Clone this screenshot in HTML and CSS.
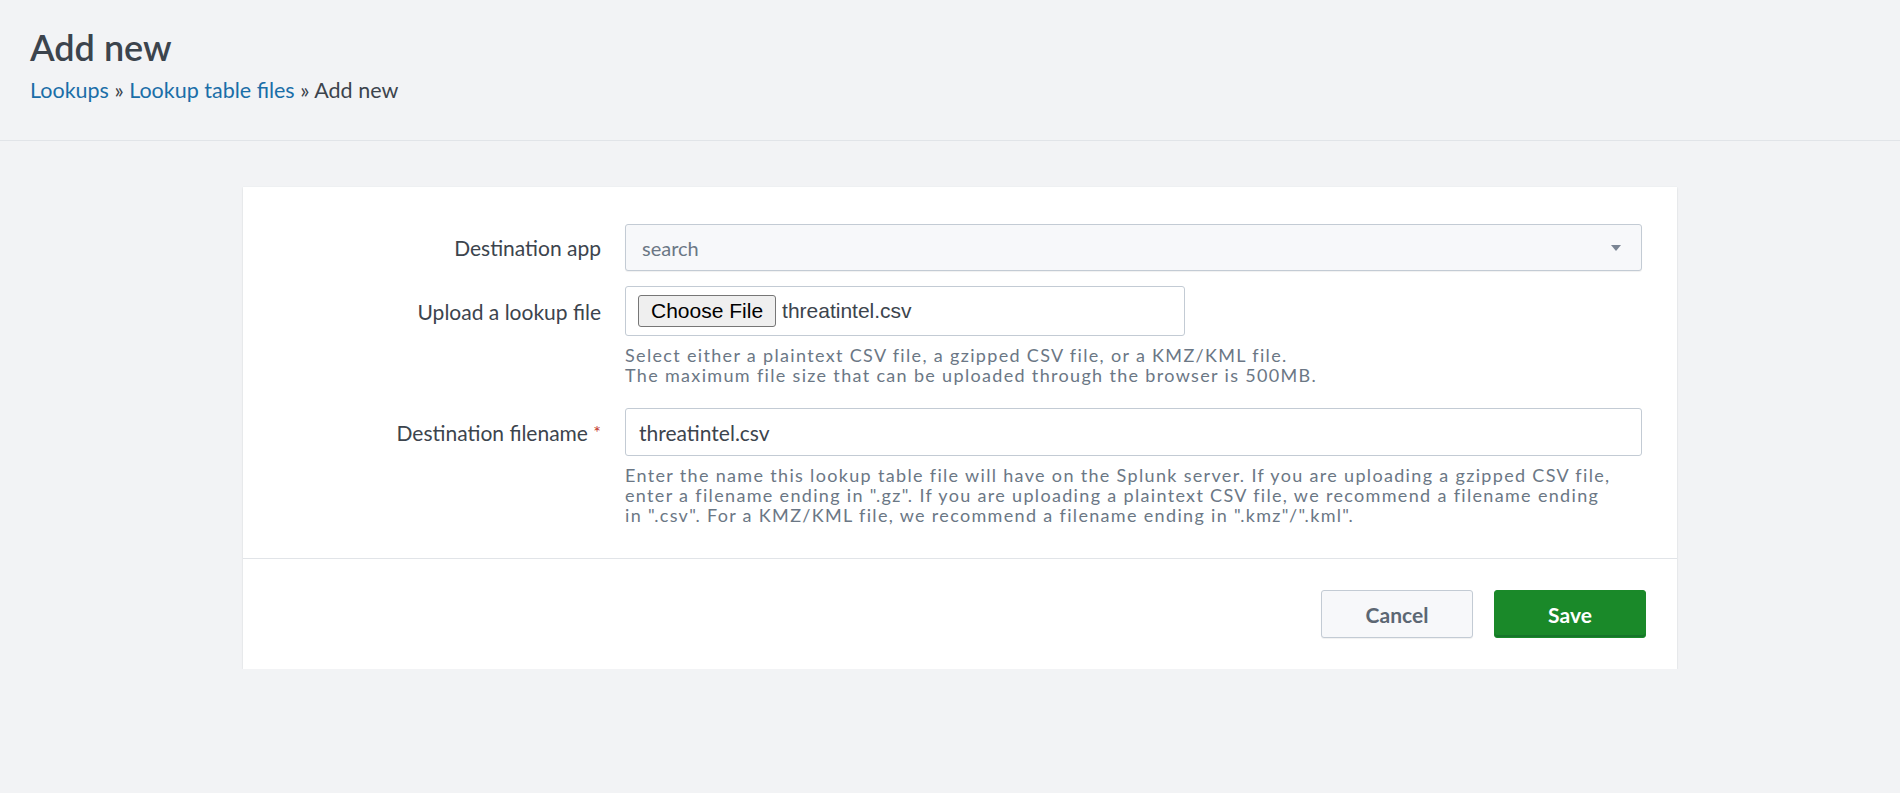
FILE: index.html
```html
<!DOCTYPE html>
<html lang="en">
<head>
<meta charset="utf-8">
<title>Add new</title>
<link rel="stylesheet" href="styles.css">
</head>
<body>
<header class="page-header">
  <h1 class="page-title">Add new</h1>
  <nav class="breadcrumb">
    <a href="#" class="crumb-link">Lookups</a> <span class="sep">»</span> <a href="#" class="crumb-link">Lookup table files</a> <span class="sep">»</span> <span class="crumb-current">Add new</span>
  </nav>
</header>

<main class="content">
  <section class="card">
    <div class="form-body">
      <div class="field">
        <label class="field-label">Destination app</label>
        <div class="select">
          <span class="select-value">search</span>
          <span class="caret"></span>
        </div>
      </div>

      <div class="field">
        <label class="field-label">Upload a lookup file</label>
        <div class="file-box">
          <span class="file-btn">Choose File</span>
          <span class="file-name">threatintel.csv</span>
        </div>
        <p class="help">Select either a plaintext CSV file, a gzipped CSV file, or a KMZ/KML file.<br>The maximum file size that can be uploaded through the browser is 500MB.</p>
      </div>

      <div class="field">
        <label class="field-label">Destination filename <span class="req">*</span></label>
        <div class="text-input">threatintel.csv</div>
        <p class="help">Enter the name this lookup table file will have on the Splunk server. If you are uploading a gzipped CSV file,<br>enter a filename ending in ".gz". If you are uploading a plaintext CSV file, we recommend a filename ending<br>in ".csv". For a KMZ/KML file, we recommend a filename ending in ".kmz"/".kml".</p>
      </div>
    </div>

    <div class="form-footer">
      <button class="btn btn-cancel">Cancel</button>
      <button class="btn btn-save">Save</button>
    </div>
  </section>
</main>
</body>
</html>
```
FILE: styles.css
```css
* { box-sizing: border-box; }

html, body {
  margin: 0;
  padding: 0;
  background: #f2f3f5;
  font-family: Lato, "Open Sans", sans-serif;
  color: #3c444d;
}

.page-header {
  padding: 26px 30px 37px;
  border-bottom: 1px solid #e1e4e8;
}

.page-title {
  margin: 0;
  font-size: 36px;
  font-weight: 600;
  line-height: 43px;
  color: #3c444d;
}

.breadcrumb {
  margin-top: 9px;
  font-size: 21.5px;
  line-height: 25px;
  color: #3c444d;
}

.crumb-link {
  color: #1a6ea8;
  text-decoration: none;
}

.sep { color: #3c444d; }

.content {
  padding: 46px 0 0 243px;
}

.card {
  width: 1434px;
  background: #fff;
  box-shadow: 0 1px 2px rgba(0, 0, 0, 0.1), 0 0 1px rgba(60, 80, 110, 0.08);
}

.form-body {
  padding: 37px 0 33px;
  display: flex;
  flex-direction: column;
  gap: 15px;
}

.field {
  display: grid;
  grid-template-columns: 358px 1017px;
  column-gap: 24px;
  align-items: center;
}

.field-label {
  text-align: right;
  font-size: 21px;
  line-height: 25px;
  color: #3c444d;
}

.req { color: #c3342b; font-size: 18px; vertical-align: top; }

.select {
  height: 47px;
  background: #f7f8fa;
  border: 1px solid #c3cbd4;
  border-radius: 3px;
  box-shadow: 0 1px 1px rgba(0, 0, 0, 0.06);
  display: flex;
  align-items: center;
  justify-content: space-between;
  padding: 0 20px 0 16px;
}

.select-value {
  font-size: 20px;
  color: #6b7785;
}

.caret {
  width: 0;
  height: 0;
  border-left: 5px solid transparent;
  border-right: 5px solid transparent;
  border-top: 6px solid #7b8594;
}

.file-box {
  width: 560px;
  height: 50px;
  border: 1px solid #c3cbd4;
  border-radius: 3px;
  background: #fff;
  display: flex;
  align-items: center;
  padding-left: 12px;
  font-family: "Liberation Sans", Arial, sans-serif;
}

.file-btn {
  height: 32px;
  padding: 0 12px;
  display: flex;
  align-items: center;
  font-size: 21px;
  color: #000;
  background: #efefef;
  border: 1px solid #767676;
  border-radius: 3px;
}

.file-name {
  margin-left: 6px;
  font-size: 21px;
  color: #3c444d;
}

.text-input {
  height: 48px;
  border: 1px solid #c3cbd4;
  border-radius: 3px;
  background: #fff;
  display: flex;
  align-items: center;
  padding-left: 13px;
  font-size: 21px;
  color: #3c444d;
}

.help {
  grid-column: 2;
  margin: 9px 0 8px;
  font-size: 18px;
  line-height: 20px;
  letter-spacing: 1.33px;
  white-space: nowrap;
  color: #6b7785;
}

.field:last-child .help { margin-bottom: 0; }

.form-footer {
  border-top: 1px solid #e1e4e8;
  padding: 31px 31px 31px 0;
  display: flex;
  justify-content: flex-end;
  gap: 21px;
}

.btn {
  width: 152px;
  height: 48px;
  border-radius: 3px;
  font-family: Lato, sans-serif;
  font-size: 21px;
  font-weight: 700;
  cursor: pointer;
}

.btn-cancel {
  background: #f7f8fa;
  border: 1px solid #c3cbd4;
  color: #5c6773;
  box-shadow: 0 1px 1px rgba(0, 0, 0, 0.06);
}

.btn-save {
  background: #1a8929;
  border: 1px solid #1a8929;
  color: #fff;
  box-shadow: inset 0 -2px 0 #16752a;
}
```
